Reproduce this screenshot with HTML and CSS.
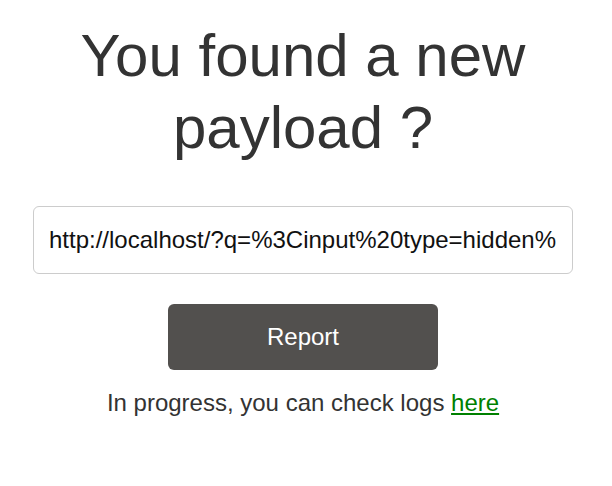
FILE: index.html
```html
<!DOCTYPE html>
<html>
<head>
<meta charset="utf-8">
<link rel="stylesheet" href="styles.css">
</head>
<body>
<main class="wrap">
  <h1 class="title">You found a new payload ?</h1>
  <form class="form">
    <input class="url" type="text" value="http://localhost/?q=%3Cinput%20type=hidden%20value=1%3E">
    <button class="btn" type="button">Report</button>
  </form>
  <p class="status">In progress, you can check logs <a href="#" class="link">here</a></p>
</main>
</body>
</html>
```
FILE: styles.css
```css
html, body {
  margin: 0;
  padding: 0;
  background: #fff;
}
body {
  width: 606px;
  font-family: "Liberation Sans", Arial, sans-serif;
  color: #333;
}
.wrap {
  width: 540px;
  margin: 0 auto;
  padding-top: 20px;
  display: flex;
  flex-direction: column;
  align-items: center;
  text-align: center;
}
.title {
  margin: 0;
  font-size: 60px;
  font-weight: normal;
  line-height: 72px;
  color: #333;
}
.form {
  margin-top: 42px;
  width: 100%;
  display: flex;
  flex-direction: column;
  align-items: center;
}
.url {
  box-sizing: border-box;
  width: 540px;
  height: 68px;
  border: 1px solid #ccc;
  border-radius: 6px;
  padding: 0 16px 0 15px;
  font-family: "Liberation Sans", Arial, sans-serif;
  font-size: 24px;
  color: #111;
  background: #fff;
  outline: none;
}
.btn {
  margin-top: 30px;
  width: 270px;
  height: 66px;
  border: none;
  border-radius: 6px;
  background: #52504e;
  color: #fff;
  font-family: "Liberation Sans", Arial, sans-serif;
  font-size: 24px;
}
.status {
  margin: 18px 0 0;
  font-size: 24px;
  line-height: 30px;
  color: #333;
}
.link {
  color: #008000;
}
```
